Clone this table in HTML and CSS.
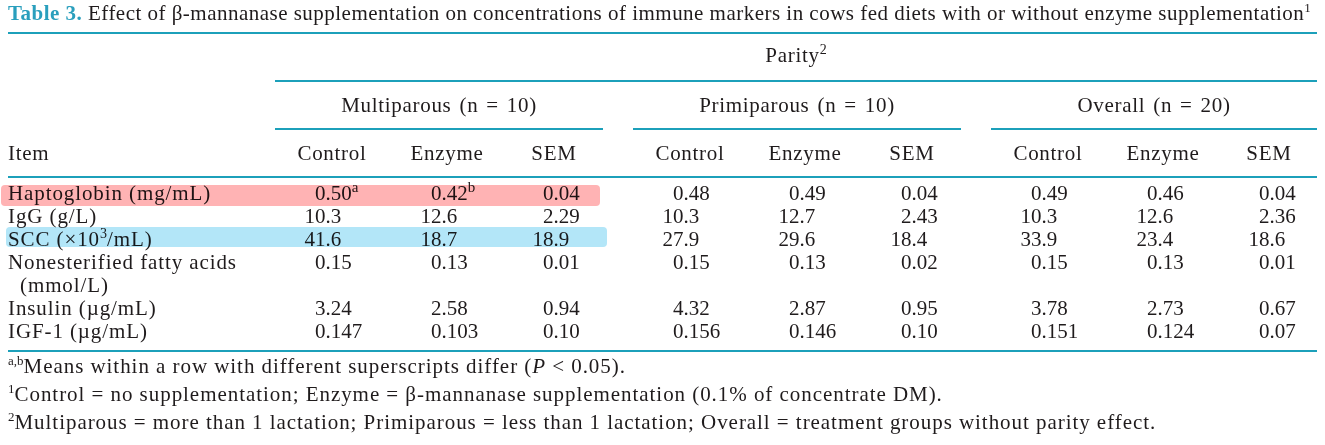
FILE: index.html
```html
<!DOCTYPE html>
<html lang="en">
<head>
<meta charset="utf-8">
<title>Table 3</title>
<link rel="stylesheet" href="styles.css">
</head>
<body>
<div class="page">
  <div class="caption"><span class="tlabel">Table 3.</span> Effect of β-mannanase supplementation on concentrations of immune markers in cows fed diets with or without enzyme supplementation<sup>1</sup></div>

  <div class="grid hrow">
    <div></div>
    <div class="parity t">Parity<sup>2</sup></div>
  </div>

  <div class="grid hrow">
    <div></div>
    <div class="grp t">Multiparous (n = 10)</div>
    <div></div>
    <div class="grp t">Primiparous (n = 10)</div>
    <div></div>
    <div class="grp t">Overall (n = 20)</div>
  </div>

  <div class="grid hrow colrow">
    <div class="item t">Item</div>
    <div class="ch t">Control</div><div class="ch t">Enzyme</div><div class="ch t">SEM</div>
    <div></div>
    <div class="ch t">Control</div><div class="ch t">Enzyme</div><div class="ch t">SEM</div>
    <div></div>
    <div class="ch t">Control</div><div class="ch t">Enzyme</div><div class="ch t">SEM</div>
  </div>

  <div class="tbody">
    <div class="grid drow hl-pink">
      <div class="lab">Haptoglobin (mg/mL)</div>
      <div class="v c"><span class="n">0</span>.50<sup>a</sup></div>
      <div class="v e"><span class="n">0</span>.42<sup>b</sup></div>
      <div class="v s"><span class="n">0</span>.04</div>
      <div></div>
      <div class="v c"><span class="n">0</span>.48</div>
      <div class="v e"><span class="n">0</span>.49</div>
      <div class="v s"><span class="n">0</span>.04</div>
      <div></div>
      <div class="v c"><span class="n">0</span>.49</div>
      <div class="v e"><span class="n">0</span>.46</div>
      <div class="v s"><span class="n">0</span>.04</div>
    </div>
    <div class="grid drow">
      <div class="lab">IgG (g/L)</div>
      <div class="v c"><span class="n">10</span>.3</div>
      <div class="v e"><span class="n">12</span>.6</div>
      <div class="v s"><span class="n">2</span>.29</div>
      <div></div>
      <div class="v c"><span class="n">10</span>.3</div>
      <div class="v e"><span class="n">12</span>.7</div>
      <div class="v s"><span class="n">2</span>.43</div>
      <div></div>
      <div class="v c"><span class="n">10</span>.3</div>
      <div class="v e"><span class="n">12</span>.6</div>
      <div class="v s"><span class="n">2</span>.36</div>
    </div>
    <div class="grid drow hl-blue">
      <div class="lab">SCC (×10<sup>3</sup>/mL)</div>
      <div class="v c"><span class="n">41</span>.6</div>
      <div class="v e"><span class="n">18</span>.7</div>
      <div class="v s"><span class="n">18</span>.9</div>
      <div></div>
      <div class="v c"><span class="n">27</span>.9</div>
      <div class="v e"><span class="n">29</span>.6</div>
      <div class="v s"><span class="n">18</span>.4</div>
      <div></div>
      <div class="v c"><span class="n">33</span>.9</div>
      <div class="v e"><span class="n">23</span>.4</div>
      <div class="v s"><span class="n">18</span>.6</div>
    </div>
    <div class="grid drow">
      <div class="lab">Nonesterified fatty acids<br><span class="cont">(mmol/L)</span></div>
      <div class="v c"><span class="n">0</span>.15</div>
      <div class="v e"><span class="n">0</span>.13</div>
      <div class="v s"><span class="n">0</span>.01</div>
      <div></div>
      <div class="v c"><span class="n">0</span>.15</div>
      <div class="v e"><span class="n">0</span>.13</div>
      <div class="v s"><span class="n">0</span>.02</div>
      <div></div>
      <div class="v c"><span class="n">0</span>.15</div>
      <div class="v e"><span class="n">0</span>.13</div>
      <div class="v s"><span class="n">0</span>.01</div>
    </div>
    <div class="grid drow">
      <div class="lab">Insulin (µg/mL)</div>
      <div class="v c"><span class="n">3</span>.24</div>
      <div class="v e"><span class="n">2</span>.58</div>
      <div class="v s"><span class="n">0</span>.94</div>
      <div></div>
      <div class="v c"><span class="n">4</span>.32</div>
      <div class="v e"><span class="n">2</span>.87</div>
      <div class="v s"><span class="n">0</span>.95</div>
      <div></div>
      <div class="v c"><span class="n">3</span>.78</div>
      <div class="v e"><span class="n">2</span>.73</div>
      <div class="v s"><span class="n">0</span>.67</div>
    </div>
    <div class="grid drow">
      <div class="lab">IGF-1 (µg/mL)</div>
      <div class="v c"><span class="n">0</span>.147</div>
      <div class="v e"><span class="n">0</span>.103</div>
      <div class="v s"><span class="n">0</span>.10</div>
      <div></div>
      <div class="v c"><span class="n">0</span>.156</div>
      <div class="v e"><span class="n">0</span>.146</div>
      <div class="v s"><span class="n">0</span>.10</div>
      <div></div>
      <div class="v c"><span class="n">0</span>.151</div>
      <div class="v e"><span class="n">0</span>.124</div>
      <div class="v s"><span class="n">0</span>.07</div>
    </div>
  </div>

  <div class="notes">
    <p class="fn"><sup>a,b</sup>Means within a row with different superscripts differ (<i>P</i> &lt; 0.05).</p>
    <p class="fn"><sup>1</sup>Control = no supplementation; Enzyme = β-mannanase supplementation (0.1% of concentrate DM).</p>
    <p class="fn"><sup>2</sup>Multiparous = more than 1 lactation; Primiparous = less than 1 lactation; Overall = treatment groups without parity effect.</p>
  </div>
</div>
</body>
</html>
```

FILE: styles.css
```css
html, body {
  margin: 0;
  padding: 0;
  background: #ffffff;
}

body {
  font-family: "Liberation Serif", "Times New Roman", serif;
  font-size: 21px;
  color: #1f1b1c;
}

.page {
  width: 1309px;
  padding-left: 8px;
}

sup {
  font-size: 14px;
  line-height: 0;
  vertical-align: 8px;
  letter-spacing: 0;
}

.t {
  letter-spacing: 0.7px;
}

.caption {
  line-height: 26px;
  padding-bottom: 6px;
  border-bottom: 2px solid #1ca0ba;
  white-space: nowrap;
  font-size: 21px;
  letter-spacing: 0.48px;
}

.caption sup {
  font-size: 13px;
}

.tlabel {
  color: #2a9fbd;
  font-weight: bold;
}

.grid {
  display: grid;
  grid-template-columns: 267px 114px 116px 98px 30px 114px 116px 98px 30px 114px 116px 96px;
}

.hrow > div {
  line-height: 24px;
  padding-top: 11px;
  padding-bottom: 11px;
  white-space: nowrap;
}

.parity {
  grid-column: 2 / -1;
  text-align: center;
  border-bottom: 2px solid #1ca0ba;
  padding-top: 9px !important;
  padding-bottom: 13px !important;
}

.grp {
  grid-column: span 3;
  text-align: center;
  border-bottom: 2px solid #1ca0ba;
  word-spacing: 2px;
}

.colrow {
  border-bottom: 2px solid #1ca0ba;
}

.ch {
  text-align: center;
}

.tbody {
  padding-top: 4px;
  padding-bottom: 7px;
  border-bottom: 2px solid #1ca0ba;
}

.drow {
  position: relative;
  line-height: 23px;
  align-items: start;
}

.lab {
  white-space: nowrap;
  letter-spacing: 0.9px;
}

.cont {
  padding-left: 12px;
}

.v {
  white-space: nowrap;
}

.v .n {
  display: inline-block;
  width: 21px;
  text-align: right;
}

.v.c { padding-left: 29.5px; }
.v.e { padding-left: 31.5px; }
.v.s { padding-left: 27.5px; }

.v sup {
  font-size: 15px;
  vertical-align: 8px;
}

.hl-pink::after,
.hl-blue::after {
  content: "";
  position: absolute;
  border-radius: 4px;
  mix-blend-mode: multiply;
  pointer-events: none;
}

.hl-pink::after {
  left: -7px;
  top: 3px;
  width: 599px;
  height: 21px;
  background: #ffb3b4;
}

.hl-blue::after {
  left: -2px;
  top: -1px;
  width: 601px;
  height: 20px;
  background: #b3e6f8;
}

.notes {
  padding-top: 0;
}

.fn {
  margin: 0;
  line-height: 28px;
  font-size: 21px;
  letter-spacing: 0.95px;
  white-space: nowrap;
}

.fn sup {
  font-size: 13px;
  vertical-align: 8px;
  letter-spacing: 0;
}
```
